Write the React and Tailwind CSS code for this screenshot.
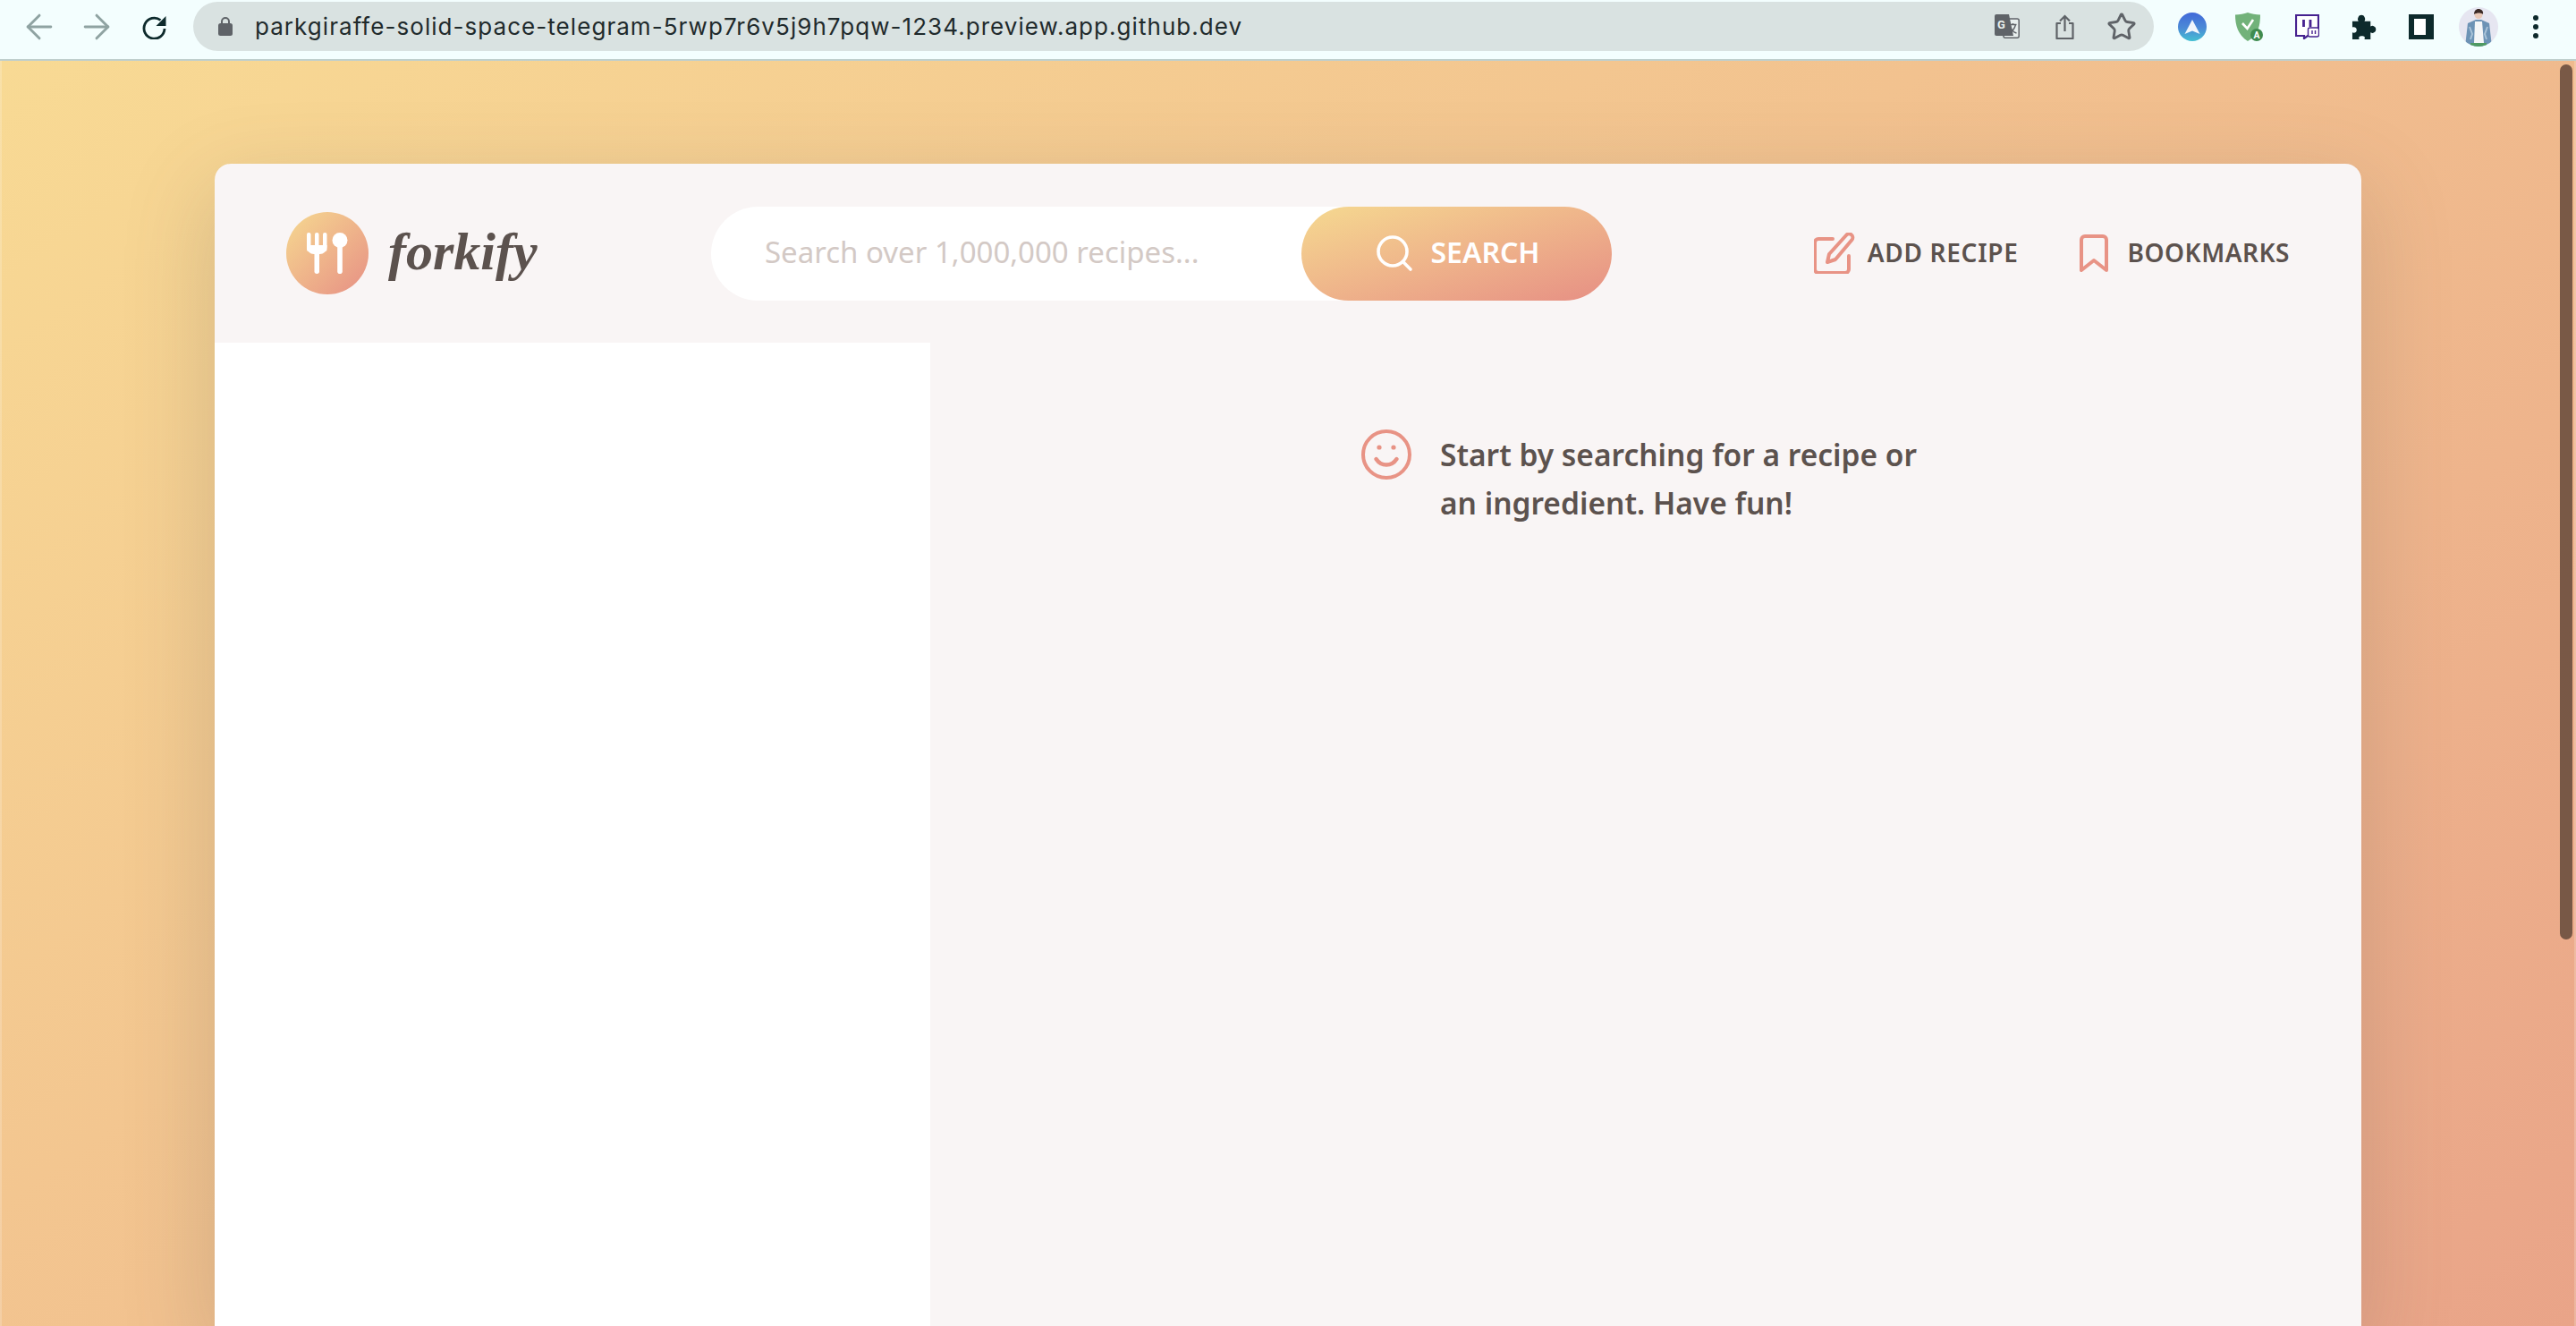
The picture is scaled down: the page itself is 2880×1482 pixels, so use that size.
import { ArrowLeft, ArrowRight, Search, Star } from 'lucide-react'

function ReloadIcon() {
  return (
    <svg width="27" height="27" viewBox="0 0 27 27" fill="none">
      <path d="M20.5 5.5A11.5 11.5 0 1 0 25 15" stroke="#0d2a2c" strokeWidth="2.8" />
      <path d="M26.5 1v11h-11z" fill="#0d2a2c" />
    </svg>
  )
}

function LockIcon() {
  return (
    <svg width="16" height="21" viewBox="0 0 16 21">
      <path d="M4 8V5a4 4 0 0 1 8 0v3" fill="none" stroke="#5f6368" strokeWidth="2" />
      <rect x="0" y="7" width="16" height="14" rx="2.5" fill="#5f6368" />
    </svg>
  )
}

function TranslateIcon() {
  return (
    <svg width="28" height="27" viewBox="0 0 28 27">
      <rect x="10" y="5" width="17.2" height="21.2" rx="2" fill="#e8efee" stroke="#5f6368" strokeWidth="1.5" />
      <path d="M2 0h14l5 24H2a2 2 0 0 1-2-2V2a2 2 0 0 1 2-2z" fill="#5f6368" />
      <text x="3" y="16" fontSize="13" fontWeight="700" fill="#e8efee" fontFamily="Roboto, sans-serif">G</text>
      <path d="M16.5 11.5h8M20.5 10v1.5M23.5 11.5c-1 4-3.5 7.5-7 9.5M18 15c1 2.5 3.5 5 6.5 6" fill="none" stroke="#5f6368" strokeWidth="1.4" />
    </svg>
  )
}

function ShareIcon() {
  return (
    <svg width="21" height="28" viewBox="0 0 21 28" fill="none" stroke="#5f6368" strokeWidth="2.2">
      <path d="M6 10H1.5v17h18V10H15" strokeLinejoin="round" />
      <path d="M10.5 19V2M5 7.5 10.5 2 16 7.5" />
    </svg>
  )
}

function NavigatorIcon() {
  return (
    <svg width="32" height="32" viewBox="0 0 32 32">
      <defs>
        <linearGradient id="navBlue" x1="0" y1="0" x2="0" y2="1">
          <stop offset="0" stopColor="#4169d9" />
          <stop offset="0.55" stopColor="#4b8bd6" />
          <stop offset="1" stopColor="#43bfd2" />
        </linearGradient>
      </defs>
      <circle cx="16" cy="16" r="16" fill="url(#navBlue)" />
      <path d="M16 8 24.5 24 16 20.5 7.5 24z" fill="#fff" opacity="0.92" />
    </svg>
  )
}

function ShieldIcon() {
  return (
    <svg width="32" height="32" viewBox="0 0 32 32">
      <path d="M14 0c4 1.5 9 2.5 14 2.5C28 14 26 25 14 32 3 25 0 14 0 2.500 5 2.500 10 1.500 14 0z" fill="#72b27a" />
      <path d="M8 12l5.500 6L20 8" fill="none" stroke="#fff" strokeWidth="2.6" />
      <circle cx="24" cy="25" r="7" fill="#3f8b4f" />
      <text x="24" y="29" textAnchor="middle" fontSize="10.5" fontWeight="700" fill="#fff" fontFamily="Roboto, sans-serif">A</text>
    </svg>
  )
}

function TwitchIcon() {
  return (
    <svg width="27" height="28" viewBox="0 0 27 28">
      <path d="M1 1h25v18l-5 5h-7l-4 3v-3H1z" fill="#fff" stroke="#46218f" strokeWidth="2.2" />
      <path d="M9.5 6v8M17 6v8" stroke="#46218f" strokeWidth="2.8" />
      <rect x="14.5" y="15" width="12" height="10" rx="2" fill="#fff" stroke="#46218f" strokeWidth="1.4" />
      <path d="M19 18v4M22.5 18v4" stroke="#46218f" strokeWidth="1.4" />
    </svg>
  )
}

function PuzzleIcon() {
  return (
    <svg width="29" height="29" viewBox="0 0 30 30">
      <path
        d="M1 8h7c-1-2-1-3 0-5 1-3 6-3 7 0 1 2 1 3 0 5h7v6c2-1 3-1 4 0 3 1 3 6 0 7-1 1-2 1-4 0v8h-7c1-3 0-4-3-4s-4 1-3 4H1v-8c2 1 5 0 5-3s-3-4-5-3z"
        fill="#0d2a2c"
      />
    </svg>
  )
}

function AvatarIcon() {
  return (
    <svg width="44" height="44" viewBox="0 0 44 44">
      <defs>
        <clipPath id="avatarClip">
          <circle cx="22" cy="22" r="22" />
        </clipPath>
      </defs>
      <g clipPath="url(#avatarClip)">
        <rect width="44" height="44" fill="#e6e6f1" />
        <path d="M7 44 10 18l9-4h6l9 4 3 26z" fill="#6d93b5" />
        <path d="M12 22l3 8-2 6M32 22l-3 8 2 6" stroke="#a9c3d8" strokeWidth="2" fill="none" />
        <path d="M18 16h8l2 24H17z" fill="#f4f6f7" />
        <circle cx="22" cy="8.5" r="4.5" fill="#e9c9b8" />
        <path d="M17 8c0-4.5 3-6 5-6s6 1.5 5 6c-2-2-7-2-10 0z" fill="#3b2a26" />
        <rect x="13" y="40" width="18" height="4" fill="#4f9a62" />
      </g>
    </svg>
  )
}

function ForkSpoon() {
  return (
    <svg width="46" height="46" viewBox="0 0 46 46" fill="#fff">
      <rect x="0" y="0" width="4.5" height="21" rx="2" />
      <rect x="9" y="0" width="4.5" height="21" rx="2" />
      <rect x="18" y="0" width="4.5" height="21" rx="2" />
      <path d="M0 14h22.5v2a8 8 0 0 1-8 8H8a8 8 0 0 1-8-8z" />
      <rect x="8.5" y="18" width="5.5" height="28" rx="2.75" />
      <circle cx="37" cy="8.5" r="8.5" />
      <rect x="34.2" y="12" width="5.6" height="34" rx="2.8" />
    </svg>
  )
}

function EditIcon() {
  return (
    <svg width="46" height="46" viewBox="0 0 46 46" fill="none" stroke="#e89385" strokeWidth="4" strokeLinecap="round" strokeLinejoin="round" className="shrink-0">
      <path d="M21 7H5a4 4 0 0 0-4 4v30a4 4 0 0 0 4 4h30a4 4 0 0 0 4-4V26" />
      <path d="M36 3a4 4 0 0 1 6.5 5L24 30l-9 3 2-9z" />
    </svg>
  )
}

function BookmarkIcon() {
  return (
    <svg width="32" height="42" viewBox="0 0 32 42" fill="none" stroke="#e89385" strokeWidth="4" strokeLinecap="round" strokeLinejoin="round">
      <path d="M2 40V6a4 4 0 0 1 4-4h20a4 4 0 0 1 4 4v34L16 29z" />
    </svg>
  )
}

function SmileIcon() {
  return (
    <svg width="56" height="56" viewBox="0 0 56 56" fill="none" stroke="#e89385" strokeLinecap="round" className="shrink-0">
      <circle cx="28" cy="28" r="26" strokeWidth="4" />
      <path d="M16.500 33c3 4.500 7 6.500 11.500 6.500s8.500-2 11.500-6.500" strokeWidth="4.500" />
      <circle cx="20" cy="20" r="2.600" fill="#e89385" stroke="none" />
      <circle cx="36" cy="20" r="2.600" fill="#e89385" stroke="none" />
    </svg>
  )
}

function Slot({ children }) {
  return <div className="w-[64px] shrink-0 flex items-center justify-center">{children}</div>
}

function BrowserBar() {
  return (
    <div className="h-[68px] shrink-0 flex items-start bg-[#f3fefe] border-b-2 border-[#bfcfcd] font-['Inter',sans-serif]">
      <div className="w-[216px] h-[60px] flex items-center pl-[12px]">
        <Slot><ArrowLeft size={44} strokeWidth={1.6} className="text-[#8fa3a2]" /></Slot>
        <Slot><ArrowRight size={44} strokeWidth={1.6} className="text-[#8fa3a2]" /></Slot>
        <Slot><ReloadIcon /></Slot>
      </div>
      <div className="mt-[2px] w-[2192px] h-[55px] rounded-full bg-[#d9e2e1] flex items-center pl-[28px] pr-[4px]">
        <LockIcon />
        <span className="ml-[25px] text-[26px] tracking-[1.05px] text-[#1f2a2c]">parkgiraffe-solid-space-telegram-5rwp7r6v5j9h7pqw-1234.preview.app.github.dev</span>
        <div className="ml-auto flex items-center">
          <Slot><TranslateIcon /></Slot>
          <Slot><ShareIcon /></Slot>
          <Slot><Star size={34} strokeWidth={2} className="text-[#5f6368]" /></Slot>
        </div>
      </div>
      <div className="flex-1 h-[60px] flex items-center pl-[11px]">
        <Slot><NavigatorIcon /></Slot>
        <Slot><ShieldIcon /></Slot>
        <Slot><TwitchIcon /></Slot>
        <Slot><PuzzleIcon /></Slot>
        <Slot>
          <div className="w-[28px] h-[28px] border-y-[5px] border-l-[6px] border-r-[9px] border-[#0d2a2c] bg-white" />
        </Slot>
        <Slot><AvatarIcon /></Slot>
        <Slot>
          <div className="flex flex-col gap-[4px]">
            <span className="w-[6px] h-[6px] rounded-full bg-[#0d2a2c]" />
            <span className="w-[6px] h-[6px] rounded-full bg-[#0d2a2c]" />
            <span className="w-[6px] h-[6px] rounded-full bg-[#0d2a2c]" />
          </div>
        </Slot>
      </div>
    </div>
  )
}

export default function App() {
  return (
    <div className="relative w-[2880px] h-[1482px] overflow-hidden flex flex-col font-['Noto_Sans',sans-serif]">
      <BrowserBar />

      <main className="flex-1 min-h-0 overflow-hidden pt-[115px] border-x-2 border-white/20 bg-origin-border bg-linear-to-br from-[#f8da94] to-[#e69a86] bg-size-[100%_2040px]">
        <div className="w-[2400px] h-full mx-auto flex flex-col rounded-t-[18px] overflow-hidden bg-[#f9f5f5] shadow-[0_32px_96px_8px_rgba(97,85,81,0.2)]">
          {/* Header */}
          <header className="h-[200px] shrink-0 flex items-center pl-[80px] pr-[80px]">
            <div className="flex items-center w-[475px] shrink-0">
              <div className="w-[92px] h-[92px] rounded-full flex items-center justify-center bg-linear-to-br from-[#f5d990] to-[#e68f84]">
                <ForkSpoon />
              </div>
              <span className="ml-[22px] mb-[4px] text-[60px] leading-none font-bold italic text-[#5c524e] font-['Liberation_Serif',serif]">forkify</span>
            </div>

            <form className="w-[1007px] h-[105px] rounded-full bg-white flex items-center">
              <span className="flex-1 pl-[60px] pb-[2px] text-[33px] text-[#d3c9c5]">Search over 1,000,000 recipes...</span>
              <button type="button" className="w-[347px] h-full rounded-full flex items-center justify-center gap-[16px] text-white text-[32px] font-semibold bg-linear-to-br from-[#f5d990] to-[#e68f84]">
                <Search size={48} strokeWidth={1.8} />
                <span className="pb-[2px]">SEARCH</span>
              </button>
            </form>

            <nav className="ml-auto flex items-center text-[28px] font-semibold text-[#5c524e]">
              <EditIcon />
              <span className="ml-[14px] mb-[2px] tracking-[0.7px]">ADD RECIPE</span>
              <span className="ml-[68px]"><BookmarkIcon /></span>
              <span className="ml-[22px] mb-[2px] tracking-[0.5px]">BOOKMARKS</span>
            </nav>
          </header>

          {/* Body */}
          <div className="flex-1 min-h-0 flex">
            <aside className="w-[800px] shrink-0 bg-white" />
            <section className="flex-1 pt-[97px]">
              <div className="ml-[482px] w-[640px] flex items-start">
                <SmileIcon />
                <p className="ml-[32px] mt-[1px] text-[33.5px] leading-[54px] font-semibold text-[#5c524e]">
                  Start by searching for a recipe or an ingredient. Have fun!
                </p>
              </div>
            </section>
          </div>
        </div>
      </main>

      {/* Overlay scrollbar */}
      <div className="absolute top-[72px] left-[2862px] w-[14px] h-[978px] rounded-full bg-[#6b4f3e]/90" />
    </div>
  )
}
